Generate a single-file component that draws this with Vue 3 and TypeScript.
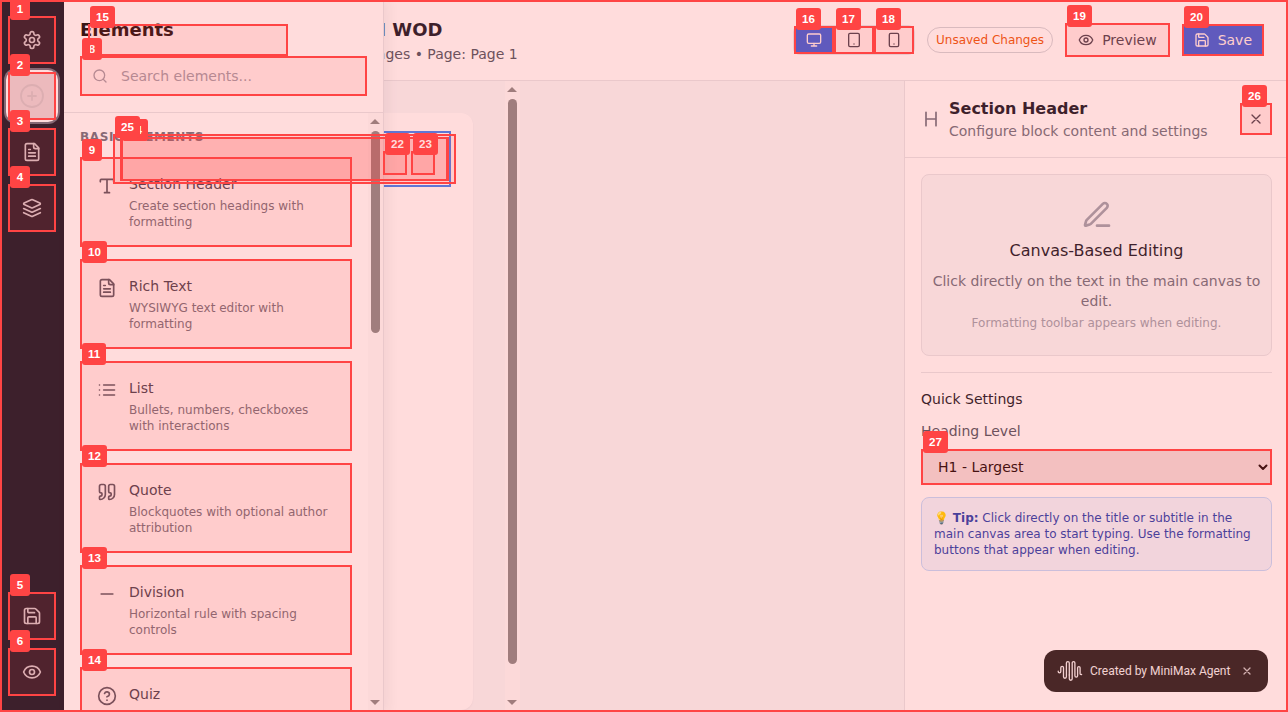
<script setup lang="ts">
import { h, type FunctionalComponent } from 'vue'

const icons: Record<string, string> = {
  settings:
    '<path d="M12.22 2h-.44a2 2 0 0 0-2 2v.18a2 2 0 0 1-1 1.73l-.43.25a2 2 0 0 1-2 0l-.15-.08a2 2 0 0 0-2.73.73l-.22.38a2 2 0 0 0 .73 2.73l.15.1a2 2 0 0 1 1 1.72v.51a2 2 0 0 1-1 1.74l-.15.09a2 2 0 0 0-.73 2.73l.22.38a2 2 0 0 0 2.73.73l.15-.08a2 2 0 0 1 2 0l.43.25a2 2 0 0 1 1 1.73V20a2 2 0 0 0 2 2h.44a2 2 0 0 0 2-2v-.18a2 2 0 0 1 1-1.73l.43-.25a2 2 0 0 1 2 0l.15.08a2 2 0 0 0 2.73-.73l.22-.39a2 2 0 0 0-.73-2.73l-.15-.08a2 2 0 0 1-1-1.74v-.5a2 2 0 0 1 1-1.74l.15-.09a2 2 0 0 0 .73-2.73l-.22-.38a2 2 0 0 0-2.73-.73l-.15.08a2 2 0 0 1-2 0l-.43-.25a2 2 0 0 1-1-1.73V4a2 2 0 0 0-2-2z"/><circle cx="12" cy="12" r="3"/>',
  plus: '<circle cx="12" cy="12" r="11"/><path d="M8 12h8M12 8v8"/>',
  file: '<path d="M15 2H6a2 2 0 0 0-2 2v16a2 2 0 0 0 2 2h12a2 2 0 0 0 2-2V7Z"/><path d="M14 2v4a2 2 0 0 0 2 2h4M10 9H8M16 13H8M16 17H8"/>',
  layers:
    '<path d="m12.83 2.18a2 2 0 0 0-1.66 0L2.6 6.08a1 1 0 0 0 0 1.83l8.58 3.91a2 2 0 0 0 1.66 0l8.58-3.9a1 1 0 0 0 0-1.83Z"/><path d="m22 17.65-9.17 4.16a2 2 0 0 1-1.66 0L2 17.65"/><path d="m22 12.65-9.17 4.16a2 2 0 0 1-1.66 0L2 12.65"/>',
  save: '<path d="M15.2 3a2 2 0 0 1 1.4.6l3.8 3.8a2 2 0 0 1 .6 1.4V19a2 2 0 0 1-2 2H5a2 2 0 0 1-2-2V5a2 2 0 0 1 2-2z"/><path d="M17 21v-7a1 1 0 0 0-1-1H8a1 1 0 0 0-1 1v7"/><path d="M7 3v4a1 1 0 0 0 1 1h7"/>',
  eye: '<path d="M2.062 12.348a1 1 0 0 1 0-.696 10.75 10.75 0 0 1 19.876 0 1 1 0 0 1 0 .696 10.75 10.75 0 0 1-19.876 0"/><circle cx="12" cy="12" r="3"/>',
  type: '<path d="M12 4v16M4 7V5a1 1 0 0 1 1-1h14a1 1 0 0 1 1 1v2M9 20h6"/>',
  list: '<path d="M3 12h.01M3 18h.01M3 6h.01M8 12h13M8 18h13M8 6h13"/>',
  quote:
    '<path d="M16 3a2 2 0 0 0-2 2v6a2 2 0 0 0 2 2 1 1 0 0 1 1 1v1a2 2 0 0 1-2 2 1 1 0 0 0-1 1v2a1 1 0 0 0 1 1 6 6 0 0 0 6-6V5a2 2 0 0 0-2-2z"/><path d="M5 3a2 2 0 0 0-2 2v6a2 2 0 0 0 2 2 1 1 0 0 1 1 1v1a2 2 0 0 1-2 2 1 1 0 0 0-1 1v2a1 1 0 0 0 1 1 6 6 0 0 0 6-6V5a2 2 0 0 0-2-2z"/>',
  minus: '<path d="M5 12h14"/>',
  help: '<circle cx="12" cy="12" r="10"/><path d="M9.09 9a3 3 0 0 1 5.83 1c0 2-3 3-3 3M12 17h.01"/>',
  search: '<circle cx="11" cy="11" r="8"/><path d="m21 21-4.3-4.3"/>',
  monitor: '<rect width="20" height="14" x="2" y="3" rx="2"/><path d="M8 21h8M12 17v4"/>',
  tablet: '<rect width="16" height="20" x="4" y="2" rx="2"/><path d="M12 18h.01"/>',
  phone: '<rect width="14" height="20" x="5" y="2" rx="2"/><path d="M12 18h.01"/>',
  heading: '<path d="M6 12h12M6 20V4M18 20V4"/>',
  close: '<path d="M18 6 6 18M6 6l12 12"/>',
  pen: '<path d="M12 20h9"/><path d="M16.376 3.622a1 1 0 0 1 3.002 3.002L7.368 18.635a2 2 0 0 1-.855.506l-2.872.838a.5.5 0 0 1-.62-.62l.838-2.872a2 2 0 0 1 .506-.854z"/>',
  chevron: '<path d="m5 9 7 7 7-7"/>',
}

const Icon: FunctionalComponent<{ name: string; size?: number; weight?: number }> = (props) =>
  h('svg', {
    width: props.size ?? 20,
    height: props.size ?? 20,
    viewBox: '0 0 24 24',
    fill: 'none',
    stroke: 'currentColor',
    'stroke-width': props.weight ?? 2,
    'stroke-linecap': 'round',
    'stroke-linejoin': 'round',
    innerHTML: icons[props.name],
  })
Icon.props = ['name', 'size', 'weight']

const elements = [
  { icon: 'type', title: 'Section Header', text: 'Create section headings with formatting' },
  { icon: 'file', title: 'Rich Text', text: 'WYSIWYG text editor with formatting' },
  { icon: 'list', title: 'List', text: 'Bullets, numbers, checkboxes with interactions' },
  { icon: 'quote', title: 'Quote', text: 'Blockquotes with optional author attribution' },
  { icon: 'minus', title: 'Division', text: 'Horizontal rule with spacing controls' },
  { icon: 'help', title: 'Quiz', text: '' },
]

interface Mark {
  id: number
  x: number
  y: number
  w: number
  h: number
}

const marks: Mark[] = (
  [
    [1, 8, 16, 48, 48],
    [2, 8, 72, 48, 48],
    [3, 8, 128, 48, 48],
    [4, 8, 184, 48, 48],
    [5, 8, 592, 48, 48],
    [6, 8, 648, 48, 48],
    [8, 80, 56, 287, 40],
    [9, 80, 157, 272, 90],
    [10, 80, 259, 272, 90],
    [11, 80, 361, 272, 90],
    [12, 80, 463, 272, 90],
    [13, 80, 565, 272, 90],
    [14, 80, 667, 272, 90],
    [15, 88, 24, 200, 32],
    [16, 794, 26, 40, 28],
    [17, 834, 26, 40, 28],
    [18, 874, 26, 40, 28],
    [19, 1065, 23, 105, 34],
    [20, 1182, 24, 82, 32],
    [21, 120, 137, 328, 44],
    [22, 383, 151, 24, 24],
    [23, 411, 151, 24, 24],
    [24, 121, 137, 328, 44],
    [25, 113, 134, 343, 50],
    [26, 1240, 103, 32, 32],
    [27, 921, 449, 351, 36],
  ] as const
).map(([id, x, y, w, h]) => ({ id, x, y, w, h }))

const box = (m: Mark) => ({
  left: `${m.x}px`,
  top: `${m.y}px`,
  width: `${m.w}px`,
  height: `${m.h}px`,
})
</script>

<template>
  <div class="app">
    <nav class="rail">
      <button class="rail-btn"><Icon name="settings" /></button>
      <button class="rail-btn active"><Icon name="plus" :size="24" :weight="1.8" /></button>
      <button class="rail-btn"><Icon name="file" /></button>
      <button class="rail-btn"><Icon name="layers" /></button>
      <span class="grow"></span>
      <button class="rail-btn"><Icon name="save" /></button>
      <button class="rail-btn"><Icon name="eye" /></button>
    </nav>

    <div class="main">
      <header class="topbar">
        <div class="heading">
          <h1>H WOD</h1>
          <p>Pages • Page: Page 1</p>
        </div>
        <div class="actions">
          <div class="devices">
            <button class="on"><Icon name="monitor" :size="16" /></button>
            <button><Icon name="tablet" :size="16" /></button>
            <button><Icon name="phone" :size="16" /></button>
          </div>
          <span class="unsaved">Unsaved Changes</span>
          <button class="btn preview"><Icon name="eye" :size="16" />Preview</button>
          <button class="btn save"><Icon name="save" :size="16" />Save</button>
        </div>
      </header>

      <div class="workspace">
        <div class="canvas">
          <div class="sheet"><div class="selected"></div></div>
          <div class="scroll">
            <i class="up"></i>
            <span class="thumb canvas-thumb"></span>
            <i class="down"></i>
          </div>
        </div>

        <aside class="props">
          <div class="props-head">
            <Icon name="heading" class="muted" />
            <div class="grow">
              <h2>Section Header</h2>
              <p>Configure block content and settings</p>
            </div>
            <button class="close"><Icon name="close" :size="16" /></button>
          </div>
          <div class="props-body">
            <div class="notice">
              <Icon name="pen" :size="32" />
              <h3>Canvas-Based Editing</h3>
              <p>Click directly on the text in the main canvas to edit.</p>
              <small>Formatting toolbar appears when editing.</small>
            </div>
            <div class="quick">
              <h4>Quick Settings</h4>
              <label>Heading Level</label>
              <div class="select"><span>H1 - Largest</span><Icon name="chevron" :size="12" :weight="4" /></div>
              <div class="tip">
                💡 <strong>Tip:</strong> Click directly on the title or subtitle in the main canvas area to
                start typing. Use the formatting buttons that appear when editing.
              </div>
            </div>
          </div>
        </aside>
      </div>
    </div>

    <aside class="drawer">
      <div class="drawer-head">
        <h2>Elements</h2>
        <div class="search"><Icon name="search" :size="16" /><span>Search elements...</span></div>
      </div>
      <div class="drawer-body">
        <div class="items">
          <h3>Basic Elements</h3>
          <div v-for="e in elements" :key="e.title" class="item">
            <Icon :name="e.icon" />
            <div>
              <h4>{{ e.title }}</h4>
              <p v-if="e.text">{{ e.text }}</p>
            </div>
          </div>
        </div>
        <div class="scroll">
          <i class="up"></i>
          <span class="thumb drawer-thumb"></span>
          <i class="down"></i>
        </div>
      </div>
    </aside>

    <div class="badge">
      <svg width="26" height="22" viewBox="0 0 26 22" fill="none" stroke="currentColor" stroke-width="1.3" stroke-linecap="round">
        <path d="M1.2 11.2v.4a1.3 1.3 0 0 0 2.6 0V7.8a1.35 1.35 0 0 1 2.7 0v9a1.45 1.45 0 0 0 2.9 0V3a1.45 1.45 0 0 1 2.9 0v12" />
        <path d="M12.3 15v3.8a1.45 1.45 0 0 0 2.9 0V3a1.35 1.35 0 0 1 2.7 0v12.8a1.35 1.35 0 0 0 2.7 0V7.8a1.25 1.25 0 0 1 2.5 0v6a1 1 0 0 0 1.5 .6" />
      </svg>
      <span>Created by MiniMax Agent</span>
      <Icon name="close" class="dismiss" :size="12" :weight="2.6" />
    </div>

    <div class="marks">
      <div v-for="m in marks" :key="m.id" class="mark" :style="box(m)">
        <b>{{ m.id }}</b>
      </div>
    </div>
  </div>
</template>

<style>
body {
  margin: 0;
  overflow: hidden;
}
</style>

<style scoped>
* {
  box-sizing: border-box;
  margin: 0;
}
.app {
  position: relative;
  display: flex;
  width: 1288px;
  height: 712px;
  overflow: hidden;
  background: #fff;
  color: #111827;
  font-family: 'DejaVu Sans', sans-serif;
  font-size: 14px;
  line-height: 20px;
}
svg {
  display: block;
  flex: none;
}
button {
  display: flex;
  align-items: center;
  justify-content: center;
  padding: 0;
  border: 0;
  background: none;
  color: #374151;
  font: inherit;
}
.grow {
  flex: 1;
}
.rail {
  display: flex;
  flex: none;
  flex-direction: column;
  gap: 8px;
  width: 64px;
  padding: 16px 8px;
  background: #111827;
}
.rail-btn {
  flex: none;
  width: 48px;
  height: 48px;
  border-radius: 8px;
  color: #d1d5db;
}
.rail-btn.active {
  background: #e5e7eb;
  color: #d1d5db;
  box-shadow: 0 0 0 2px #fff, 0 0 0 4px #6b7280;
}
.main {
  display: flex;
  flex: 1;
  flex-direction: column;
  min-width: 0;
}
.topbar {
  display: flex;
  flex: none;
  align-items: center;
  justify-content: space-between;
  height: 81px;
  padding: 0 24px 0 304px;
  border-bottom: 1px solid #e5e7eb;
}
.heading {
  display: flex;
  flex-direction: column;
  align-items: flex-start;
}
.heading h1 {
  padding-left: 3px;
  font-size: 18px;
  line-height: 28px;
}
.heading p {
  padding-left: 1px;
  color: #4b5563;
}
.actions {
  display: flex;
  align-items: center;
  gap: 12px;
}
.devices {
  display: flex;
  margin-right: 1px;
  border-radius: 6px;
  box-shadow: 0 0 0 1px #e5e7eb;
}
.devices button {
  width: 40px;
  height: 28px;
}
.devices .on {
  background: #2563eb;
  color: #fff;
}
.unsaved {
  display: flex;
  align-items: center;
  height: 26px;
  padding: 0 8px;
  border: 1px solid #d1d5db;
  border-radius: 13px;
  color: #ea580c;
  font-size: 12px;
}
.btn {
  gap: 8px;
  padding: 0 12px;
}
.preview {
  height: 34px;
  border: 1px solid #d1d5db;
}
.save {
  height: 32px;
  background: #2563eb;
  color: #fff;
}
.workspace {
  display: flex;
  flex: 1;
  min-height: 0;
}
.canvas {
  display: flex;
  flex: 1;
  padding-right: 384px;
  background: #f7f9fb;
}
.sheet {
  flex: 1;
  margin: 32px 32px 2px;
  padding: 18px 22px;
  border-radius: 12px;
  background: #fff;
  box-shadow: 0 1px 2px rgba(17, 24, 39, 0.05);
}
.selected {
  height: 56px;
  border: 2px solid #3b82f6;
}
.scroll {
  display: flex;
  flex: none;
  flex-direction: column;
  align-items: center;
  width: 15px;
  padding: 6px 0 7px;
  background: #fcfcfc;
}
.scroll i {
  width: 0;
  height: 0;
  margin-right: 1px;
  border: 5px solid transparent;
}
.scroll .up {
  border-top: 0;
  border-bottom: 5px solid #8b8b8b;
}
.scroll .down {
  margin-top: auto;
  border-bottom: 0;
  border-top: 5px solid #8b8b8b;
}
.thumb {
  width: 9px;
  border-radius: 5px;
  background: #8b8b8b;
}
.canvas-thumb {
  height: 565px;
  margin-top: 7px;
}
.drawer-thumb {
  height: 202px;
  margin-top: 7px;
}
.props {
  flex: none;
  width: 384px;
  border-left: 1px solid #e5e7eb;
  background: #fff;
}
.props-head {
  display: flex;
  align-items: center;
  gap: 8px;
  height: 77px;
  padding: 0 16px;
  border-bottom: 1px solid #e5e7eb;
}
.props-head h2 {
  font-size: 16px;
  line-height: 24px;
}
.props-head p,
.muted {
  color: #6b7280;
}
.close {
  width: 32px;
  height: 32px;
}
.props-body {
  padding: 16px;
}
.notice {
  display: flex;
  flex-direction: column;
  align-items: center;
  padding: 24px 8px;
  border: 1px solid #e5e7eb;
  border-radius: 8px;
  background: #f7f9fb;
  color: #9ca3af;
  text-align: center;
}
.notice h3 {
  margin: 8px 0;
  color: #111827;
  font-size: 16px;
  font-weight: 400;
  line-height: 24px;
}
.notice p {
  color: #6b7280;
}
.notice small {
  margin-top: 4px;
  font-size: 12px;
  line-height: 16px;
}
.quick {
  display: flex;
  flex-direction: column;
  margin-top: 16px;
  padding-top: 16px;
  border-top: 1px solid #e5e7eb;
}
.quick h4 {
  margin-bottom: 12px;
  font-weight: 400;
}
.quick label {
  margin-bottom: 8px;
  color: #4b5563;
}
.select {
  display: flex;
  align-items: center;
  justify-content: space-between;
  height: 36px;
  margin-bottom: 12px;
  padding: 0 3px 0 17px;
  background: #efefef;
  color: #000;
}
.tip {
  padding: 12px;
  border: 1px solid #bfdbfe;
  border-radius: 8px;
  background: #eff6ff;
  color: #1e40af;
  font-size: 12px;
  line-height: 16px;
}
.drawer {
  position: absolute;
  top: 0;
  left: 64px;
  display: flex;
  flex-direction: column;
  width: 320px;
  height: 712px;
  border-right: 1px solid #e5e7eb;
  background: #fff;
  box-shadow: 4px 0 12px rgba(17, 24, 39, 0.06);
}
.drawer-head {
  flex: none;
  padding: 16px;
  border-bottom: 1px solid #e5e7eb;
}
.drawer-head h2 {
  margin-bottom: 12px;
  color: #0a0a0a;
  font-size: 18px;
  line-height: 28px;
}
.search {
  display: flex;
  align-items: center;
  gap: 13px;
  height: 40px;
  padding: 0 12px;
  color: #9ca3af;
}
.drawer-body {
  display: flex;
  flex: 1;
  min-height: 0;
  overflow: hidden;
}
.items {
  display: flex;
  flex: 1;
  flex-direction: column;
  gap: 12px;
  padding: 16px;
}
.items h3 {
  color: #6b7280;
  font-size: 12px;
  line-height: 16px;
  letter-spacing: 0.6px;
  text-transform: uppercase;
}
.item {
  display: flex;
  flex: none;
  gap: 12px;
  height: 90px;
  padding: 17px;
  color: #4b5563;
}
.item svg {
  margin-top: 2px;
}
.item h4 {
  margin-bottom: 4px;
  color: #374151;
  font-weight: 400;
}
.item p {
  color: #6b7280;
  font-size: 12px;
  line-height: 16px;
}
.badge {
  position: absolute;
  right: 20px;
  bottom: 20px;
  display: flex;
  align-items: center;
  width: 224px;
  height: 42px;
  padding: 0 15px 0 13px;
  border-radius: 12px;
  background: #212121;
  color: #f1f1f1;
  font-family: Roboto, sans-serif;
  font-size: 12px;
}
.badge span {
  flex: 1;
  margin-left: 7px;
  white-space: nowrap;
}
.dismiss {
  color: #c8c8c8;
}
.marks {
  position: absolute;
  inset: 0;
  overflow: hidden;
  border: 2px solid #f44;
  background: rgba(255, 68, 68, 0.19);
  background-clip: padding-box;
}
.mark {
  position: absolute;
  margin: -2px 0 0 -2px;
  border: 2px solid #f44;
  background: rgba(255, 68, 68, 0.1);
}
.mark b {
  position: absolute;
  top: -20px;
  left: 0;
  min-width: 20px;
  height: 22px;
  padding: 0 6px;
  border-radius: 3px;
  background: #f44;
  color: #fff;
  font: bold 11.6px/22px 'Liberation Sans', sans-serif;
  text-align: center;
}
</style>
